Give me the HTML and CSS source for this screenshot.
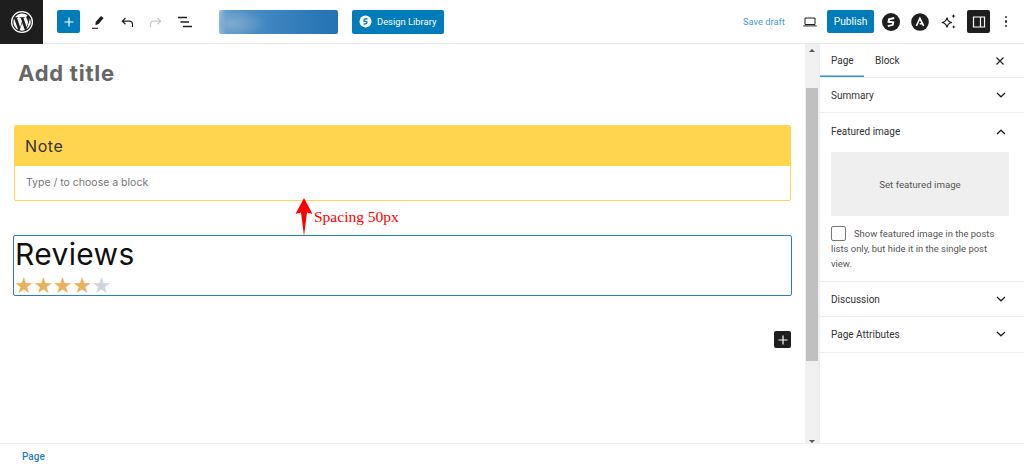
FILE: index.html
```html
<!DOCTYPE html>
<html lang="en">
<head>
<meta charset="utf-8">
<title>Add title</title>
<link rel="stylesheet" href="styles.css">
</head>
<body>
<div class="app">
  <header class="topbar">
    <div class="wp-logo">
      <svg width="24" height="24" viewBox="0 0 24 24"><circle cx="12" cy="12" r="10.400" fill="none" stroke="#fff" stroke-width="1.300"/><path fill="#fff" d="M3.400 12c0 3.400 2 6.300 4.800 7.700L4.100 8.500A8.600 8.600 0 0 0 3.400 12zm14.400-.4c0-1.100-.4-1.800-.7-2.400-.4-.7-.8-1.300-.8-2 0-.8.600-1.500 1.400-1.500h.1A8.600 8.600 0 0 0 5 7.300h.6c.9 0 2.300-.1 2.300-.1.500 0 .5.700.1.700 0 0-.5.100-1 .1l3.100 9.300 1.900-5.700-1.300-3.600c-.5 0-.9-.1-.9-.1-.5 0-.4-.8 0-.7 0 0 1.400.1 2.300.1.900 0 2.300-.1 2.300-.1.500 0 .5.700.1.700 0 0-.5.100-1 .1l3.100 9.200.9-2.900c.3-1.100.6-2 .6-2.700zM12.200 12.800l-2.600 7.500a8.600 8.600 0 0 0 5.300-.1l-.1-.1zm7.400-4.900c0 .3.100.6.100.9 0 .9-.2 1.900-.7 3.100l-2.600 7.600a8.600 8.600 0 0 0 3.200-11.600z"/></svg>
    </div>
    <div class="tools">
      <button class="add-btn" type="button" aria-label="Add block">
        <svg width="12" height="12" viewBox="0 0 12 12"><path d="M6 1.500v9M1.500 6h9" stroke="#fff" stroke-width="1.200"/></svg>
      </button>
      <span class="icon icon-pen"><svg width="18" height="18" viewBox="0 0 18 18"><path d="M12 3l2.600 2-4.900 6-3.300 1.200.2-3.200z" fill="#1e1e1e"/><path d="M3 15.300h6" stroke="#1e1e1e" stroke-width="1.100"/></svg></span>
      <span class="icon icon-undo"><svg width="18" height="18" viewBox="0 0 18 18"><path d="M14.500 14v-2.800c0-1.900-1.200-3-3-3H4.500M7.500 5L4.300 8.200l3.200 3.100" fill="none" stroke="#1e1e1e" stroke-width="1.200"/></svg></span>
      <span class="icon icon-redo"><svg width="18" height="18" viewBox="0 0 18 18"><path d="M3.500 14v-2.800c0-1.900 1.200-3 3-3h7M10.500 5l3.200 3.200-3.200 3.100" fill="none" stroke="#c9c9c9" stroke-width="1.200"/></svg></span>
      <span class="icon icon-list"><svg width="18" height="18" viewBox="0 0 18 18"><path d="M2 4.500h9M4.500 9h8.500M7 13.500h9" stroke="#1e1e1e" stroke-width="1.300"/></svg></span>
    </div>
    <div class="blur-btn"><div class="blur-fill"></div></div>
    <button class="library-btn" type="button">
      <svg width="13" height="13" viewBox="0 0 13 13"><circle cx="6.500" cy="6.500" r="6" fill="#fff"/><path d="M8.500 3.500L5.200 4.300 4.900 6.200l3 .5-.3 1.700-3 1" fill="none" stroke="#007cba" stroke-width="1.300"/></svg>
      Design Library
    </button>
    <div class="top-right">
      <span class="save">Save draft</span>
      <span class="icon-laptop"><svg width="14" height="10" viewBox="0 0 14 10"><path d="M2 1h10v6.500H2z" fill="none" stroke="#1e1e1e" stroke-width="1"/><path d="M.3 8.900h13.400" stroke="#1e1e1e" stroke-width="1"/></svg></span>
      <button class="publish" type="button">Publish</button>
      <svg class="plugin-s" width="18" height="18" viewBox="0 0 18 18"><circle cx="9" cy="9" r="9" fill="#1e1e1e"/><path d="M12.200 5L7 6.200 6.500 8.800l4.800.5-.5 2.500-5 1.400" fill="none" stroke="#fff" stroke-width="1.900"/></svg>
      <svg class="plugin-a" width="18" height="18" viewBox="0 0 18 18"><circle cx="9" cy="9" r="8.800" fill="#1e1e1e"/><path d="M5.300 13l3.600-7.500 3.800 7.500M8.700 10.800l2.300-.3" fill="none" stroke="#fff" stroke-width="1.700"/></svg>
      <svg class="sparkle" width="18" height="18" viewBox="0 0 18 18"><path d="M7 4.500c.4 3 1.800 4.500 5 5-3.200.5-4.600 1.900-5 5-.5-3.100-1.900-4.500-5.200-5C5.100 9 6.500 7.500 7 4.500z" fill="none" stroke="#1e1e1e" stroke-width="1.200"/><path d="M13.500 .8c.3 1.500.9 2.100 2.300 2.300-1.400.3-2 .9-2.300 2.400-.3-1.500-.9-2.100-2.400-2.400 1.500-.2 2.100-.8 2.400-2.300zM13.700 12c.2 1.200.7 1.700 1.800 1.900-1.100.2-1.600.8-1.800 1.900-.2-1.100-.8-1.700-1.900-1.900 1.100-.2 1.700-.7 1.900-1.900z" fill="#1e1e1e"/></svg>
      <span class="panel-toggle"><svg width="14" height="14" viewBox="0 0 14 14"><path d="M1.500 2h11v10h-11zM8.500 2v10" fill="none" stroke="#fff" stroke-width="1.200"/></svg></span>
      <span class="dots"><i></i><i></i><i></i></span>
    </div>
  </header>

  <div class="workspace">
    <main class="editor">
      <h1 class="title">Add title</h1>
      <section class="note">
        <div class="note-head">Note</div>
        <div class="note-body">Type / to choose a block</div>
      </section>
      <section class="reviews">
        <div class="reviews-title">Reviews</div>
        <div class="stars"><span>★</span><span>★</span><span>★</span><span>★</span><span class="off">★</span></div>
      </section>
      <div class="add-row">
        <span class="add-dark"><svg width="12" height="12" viewBox="0 0 12 12"><path d="M6 1.500v9M1.500 6h9" stroke="#fff" stroke-width="1.200"/></svg></span>
      </div>
      <div class="annotation">
        <svg width="18" height="40" viewBox="0 0 18 40"><path d="M9 0l8.500 16-5.500-1.500L9 38 6 14.500.5 16z" fill="#f00"/></svg>
        <span class="annotation-text">Spacing 50px</span>
      </div>
    </main>

    <div class="scrollbar">
      <span class="arrow-up"></span>
      <div class="thumb"></div>
      <span class="arrow-down"></span>
    </div>

    <aside class="sidebar">
      <div class="tabs">
        <div class="tab active">Page</div>
        <div class="tab">Block</div>
        <svg class="close" width="10" height="10" viewBox="0 0 10 10"><path d="M1.500 1.500l7 7M8.500 1.500l-7 7" stroke="#1e1e1e" stroke-width="1.100"/></svg>
      </div>
      <div class="panel panel-summary">
        <span>Summary</span>
        <svg class="chev" width="10" height="6" viewBox="0 0 10 6"><path d="M1 1l4 3.800L9 1" fill="none" stroke="#1e1e1e" stroke-width="1.200"/></svg>
      </div>
      <div class="featured">
        <div class="featured-head">
          <span>Featured image</span>
          <svg class="chev" width="10" height="6" viewBox="0 0 10 6"><path d="M1 5l4-3.800L9 5" fill="none" stroke="#1e1e1e" stroke-width="1.200"/></svg>
        </div>
        <div class="placeholder">Set featured image</div>
        <div class="check-text"><span class="checkbox"></span>Show featured image in the posts lists only, but hide it in the single post view.</div>
      </div>
      <div class="panel">
        <span>Discussion</span>
        <svg class="chev" width="10" height="6" viewBox="0 0 10 6"><path d="M1 1l4 3.800L9 1" fill="none" stroke="#1e1e1e" stroke-width="1.200"/></svg>
      </div>
      <div class="panel panel-last">
        <span>Page Attributes</span>
        <svg class="chev" width="10" height="6" viewBox="0 0 10 6"><path d="M1 1l4 3.800L9 1" fill="none" stroke="#1e1e1e" stroke-width="1.200"/></svg>
      </div>
    </aside>
  </div>

  <footer class="footer">Page</footer>
</div>
</body>
</html>
```
FILE: styles.css
```css
* { box-sizing: border-box; }
html, body { margin: 0; height: 100%; overflow: hidden; background: #fff; }
body { font-family: "Roboto", "Open Sans", sans-serif; color: #1e1e1e; }
button { font: inherit; border: 0; padding: 0; }
.app { width: 1024px; height: 468px; display: flex; flex-direction: column; }

.topbar { height: 44px; flex: none; display: flex; align-items: center; border-bottom: 1px solid #e8e8e8; }
.wp-logo { width: 43px; height: 44px; flex: none; background: #1e1e1e; display: flex; align-items: center; justify-content: center; }
.tools { display: flex; align-items: center; margin-left: 14px; width: 162px; flex: none; }
.add-btn { width: 23px; height: 23px; background: #007cba; border-radius: 2px; display: flex; align-items: center; justify-content: center; }
.icon { width: 18px; height: 18px; display: block; }
.icon svg { display: block; }
.icon-pen { margin-left: 9px; }
.icon-undo { margin-left: 11px; }
.icon-redo { margin-left: 11px; }
.icon-list { margin-left: 11px; }
.blur-btn { width: 119px; height: 24px; border-radius: 2px; overflow: hidden; flex: none; }
.blur-fill { width: 100%; height: 100%; background: radial-gradient(ellipse 30% 60% at 10% 55%, #7fabd0 0%, rgba(127,171,208,0) 100%), linear-gradient(90deg, #a3c4de 0%, #5a97c9 6%, #4a8dc3 25%, #3a83bf 50%, #2f7ab8 75%, #2472b3 100%); }
.library-btn { margin-left: 14px; width: 92px; height: 24px; flex: none; background: #007cba; color: #fff; border-radius: 2px; font-size: 9.400px; display: flex; align-items: center; gap: 5px; padding-left: 7px; white-space: nowrap; }
.top-right { margin-left: auto; display: flex; align-items: center; height: 100%; width: 282px; padding-left: 1px; }
.save { font-size: 9.300px; color: #3f9bd0; width: 60px; }
.icon-laptop { width: 14px; height: 10px; }
.icon-laptop svg { display: block; }
.publish { margin-left: 10px; width: 47px; height: 23px; background: #007cba; color: #fff; font-size: 10.200px; border-radius: 2px; }
.plugin-s { margin-left: 8px; }
.plugin-a { margin-left: 11px; }
.sparkle { margin-left: 11px; }
.panel-toggle { margin-left: 9px; width: 23px; height: 23px; background: #1e1e1e; border-radius: 2px; display: flex; align-items: center; justify-content: center; }
.dots { margin-left: 15px; width: 3px; display: flex; flex-direction: column; gap: 2.500px; }
.dots i { width: 2.200px; height: 2.200px; background: #333; border-radius: 50%; display: block; }

.workspace { flex: 1; min-height: 0; display: flex; }
.editor { width: 805px; flex: none; position: relative; padding: 0 13px; }
.title { margin: 0 0 0 5px; padding-top: 14px; height: 81px; font-family: "Inter", sans-serif; font-size: 22px; line-height: 30px; font-weight: 700; color: #666; letter-spacing: .75px; }
.note { margin-left: 1px; width: 777px; height: 76px; border-radius: 2px; border: 1px solid #ffd650; overflow: hidden; }
.note-head { height: 41px; background: #ffd550; font-family: "Inter", sans-serif; font-size: 16px; letter-spacing: .6px; color: #333; display: flex; align-items: center; padding-left: 11px; margin: -1px -1px 0; }
.note-body { font-family: "Inter", sans-serif; font-size: 10.500px; color: #777; height: 34px; display: flex; align-items: center; padding: 0 0 2px 11px; }
.reviews { margin-top: 34px; width: 779px; height: 61px; border: 1px solid #2a80b5; border-radius: 2px; padding-left: 1px; }
.reviews-title { font-family: "Inter", sans-serif; font-size: 30px; letter-spacing: .35px; line-height: 36px; color: #111; height: 40px; }
.stars { display: flex; font-family: "DejaVu Sans", sans-serif; font-size: 22px; line-height: 19px; color: #eab05a; margin-left: -1px; }
.stars span { width: 19.400px; display: block; text-align: center; }
.stars .off { color: #ccd6df; }
.add-row { margin-top: 35px; width: 778px; display: flex; justify-content: flex-end; }
.add-dark { width: 17px; height: 17px; background: #1e1e1e; border-radius: 2px; display: flex; align-items: center; justify-content: center; }
.annotation { position: absolute; left: 295px; top: 154px; display: flex; align-items: flex-start; }
.annotation svg { display: block; }
.annotation-text { font-family: "Liberation Serif", serif; font-size: 15.500px; color: #f00; margin-left: 1px; margin-top: 10px; white-space: nowrap; }

.scrollbar { width: 14px; flex: none; background: #f0f0f0; position: relative; }
.thumb { position: absolute; left: 1px; right: 1px; top: 44px; height: 273px; background: #c0c0c0; }
.arrow-up { position: absolute; left: 4px; top: 5px; border: 3px solid transparent; border-top: 0; border-bottom: 3px solid #555; }
.arrow-down { position: absolute; left: 4px; bottom: 0; border: 3px solid transparent; border-bottom: 0; border-top: 3px solid #555; }

.sidebar { flex: 1; min-width: 0; font-size: 10px; color: #333; border-left: 1px solid #eee; }
.tabs { height: 34px; display: flex; align-items: center; border-bottom: 1px solid #eee; padding-right: 19px; }
.tab { height: 33px; display: flex; align-items: center; padding: 0 11px; color: #333; width: 44px; }
.tab.active { box-shadow: inset 0 -1.500px 0 #2e93c8; }
.close { margin-left: auto; }
.panel { height: 35px; display: flex; align-items: center; justify-content: space-between; padding: 0 18px 0 11px; border-bottom: 1px solid #eee; }
.panel-last { height: 36px; padding-bottom: 1px; }
.chev { flex: none; }
.featured { height: 169px; padding: 0 18px 0 11px; border-bottom: 1px solid #eee; }
.featured-head { height: 39px; display: flex; align-items: center; justify-content: space-between; padding-bottom: 2px; }
.placeholder { margin-right: -3px; height: 64px; background: #efefef; display: flex; align-items: center; justify-content: center; color: #555; font-size: 9.700px; }
.check-text { margin-top: 10px; margin-right: -3px; line-height: 15px; font-size: 9.450px; color: #555; }
.checkbox { float: left; width: 15px; height: 15px; border: 1px solid #777; border-radius: 2px; margin: 0 8px 0 0; background: #fff; }

.footer { height: 25px; flex: none; border-top: 1px solid #eee; font-size: 10px; font-weight: 500; color: #2a7fb8; display: flex; align-items: center; padding-left: 22px; }
```
